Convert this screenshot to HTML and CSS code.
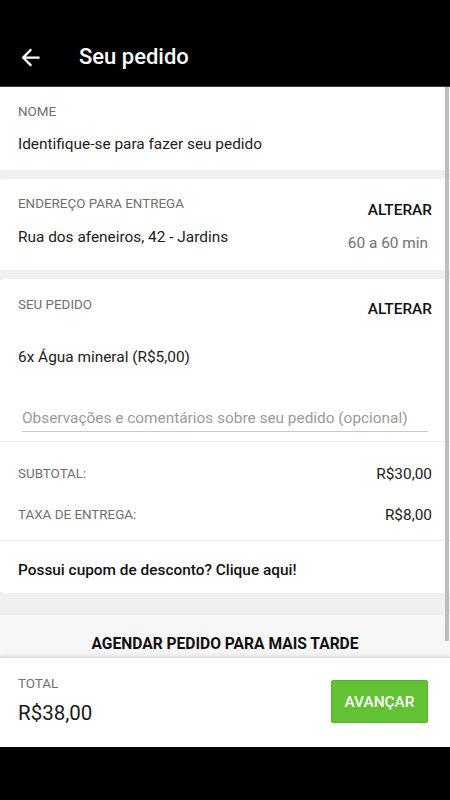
FILE: index.html
```html
<!DOCTYPE html>
<html lang="pt-BR">
  <head>
    <meta charset="UTF-8" />
    <meta name="viewport" content="width=device-width, initial-scale=1.0" />
    <title>Seu pedido</title>
    <link rel="stylesheet" href="styles.css">
  </head>
  <body>
    <div class="app">
      <!-- barra superior -->
      <header class="toolbar">
        <svg class="back" width="27" height="27" viewBox="0 0 24 24">
          <path d="M20 11H7.83l5.59-5.59L12 4l-8 8 8 8 1.41-1.41L7.83 13H20v-2z" fill="#fff" />
        </svg>
        <h1 class="title">Seu pedido</h1>
      </header>

      <main class="scroll">
        <section class="card card-name">
          <div class="label">NOME</div>
          <div class="text">Identifique-se para fazer seu pedido</div>
        </section>

        <section class="card card-address">
          <div class="col">
            <div class="label">ENDEREÇO PARA ENTREGA</div>
            <div class="text address">Rua dos afeneiros, 42 - Jardins</div>
          </div>
          <div class="col col-right">
            <div class="link">ALTERAR</div>
            <div class="time">60 a 60 min</div>
          </div>
        </section>

        <section class="card card-order">
          <div class="order-head">
            <div class="label">SEU PEDIDO</div>
            <div class="link">ALTERAR</div>
          </div>
          <div class="text item">6x Água mineral (R$5,00)</div>
          <div class="notes">Observações e comentários sobre seu pedido (opcional)</div>

          <div class="totals">
            <div class="row">
              <span class="label">SUBTOTAL:</span>
              <span class="value">R$30,00</span>
            </div>
            <div class="row">
              <span class="label">TAXA DE ENTREGA:</span>
              <span class="value">R$8,00</span>
            </div>
          </div>

          <div class="coupon">Possui cupom de desconto? Clique aqui!</div>
        </section>

        <section class="schedule">AGENDAR PEDIDO PARA MAIS TARDE</section>

        <!-- barra de rolagem -->
        <div class="scroll-thumb"></div>
      </main>

      <footer class="bottom">
        <div class="total">
          <div class="label">TOTAL</div>
          <div class="total-value">R$38,00</div>
        </div>
        <button class="btn">AVANÇAR</button>
      </footer>

      <div class="nav"></div>
    </div>
  </body>
</html>
```

FILE: styles.css
```css
* {
  padding: 0;
  margin: 0;
  box-sizing: border-box;
}

body {
  background-color: #000;
  font-family: Roboto, "Noto Sans", sans-serif;
  color: #212121;
}

.app {
  width: 450px;
  height: 800px;
  display: flex;
  flex-direction: column;
}

/* topo */
.toolbar {
  height: 87px;
  flex-shrink: 0;
  background-color: #000;
  border-bottom: 1px solid #3a3a3a;
  display: flex;
  align-items: center;
  padding: 28px 0 0 17px;
}

.back {
  display: block;
}

.title {
  margin-left: 35px;
  color: #fff;
  font-size: 22px;
  font-weight: 500;
  line-height: 26px;
}

/* conteudo */
.scroll {
  height: 570px;
  flex-shrink: 0;
  background-color: #f0f0f0;
  overflow: hidden;
  position: relative;
  display: flex;
  flex-direction: column;
  gap: 9px;
}

.card {
  flex-shrink: 0;
  background-color: #fff;
  border-radius: 2px;
}

.label {
  font-size: 13.4px;
  line-height: 16px;
  color: #6f6f6f;
}

.text {
  font-size: 15.4px;
  line-height: 20px;
  color: #212121;
}

.link {
  font-size: 15.4px;
  line-height: 20px;
  font-weight: 500;
  color: #111;
}

.card-name {
  height: 83px;
  padding: 17px 18px 0;
}

.card-name .text {
  margin-top: 14px;
}

.card-address {
  height: 91px;
  padding: 17px 18px 0;
  display: flex;
  justify-content: space-between;
}

.card-address .address {
  margin-top: 15px;
}

.col-right {
  display: flex;
  flex-direction: column;
  align-items: flex-end;
  padding-top: 4px;
}

.time {
  margin-top: 13px;
  margin-right: 4px;
  font-size: 15.4px;
  line-height: 20px;
  color: #707070;
}

.card-order {
  height: 314px;
  display: flex;
  flex-direction: column;
}

.order-head {
  display: flex;
  justify-content: space-between;
  padding: 18px 18px 0;
}

.order-head .link {
  margin-top: 2px;
}

.item {
  padding: 0 18px;
  margin-top: 28px;
}

.notes {
  margin: 41px 22px 0;
  padding-bottom: 3px;
  border-bottom: 1px solid #c8c8c8;
  font-size: 15.4px;
  line-height: 20px;
  color: #9a9a9a;
  white-space: nowrap;
}

.totals {
  margin-top: 9px;
  border-top: 1px solid #f0f0f0;
  border-bottom: 1px solid #ececec;
  padding: 22px 18px 16px;
  display: flex;
  flex-direction: column;
  gap: 22px;
}

.row {
  display: flex;
  justify-content: space-between;
  align-items: center;
  height: 19px;
}

.value {
  font-size: 15.4px;
  color: #212121;
}

.coupon {
  padding: 19px 18px 0;
  font-size: 15.4px;
  line-height: 20px;
  font-weight: 500;
  color: #111;
}

.schedule {
  margin-top: 13px;
  height: 80px;
  flex-shrink: 0;
  background: linear-gradient(#f8f8f8, #f6f6f6 40px, #ededed 42px);
  text-align: center;
  padding-top: 19px;
  font-size: 15.6px;
  line-height: 20px;
  font-weight: 700;
  color: #111;
}

.scroll-thumb {
  position: absolute;
  top: 0;
  right: 1px;
  width: 4px;
  height: 554px;
  background-color: #bdbdbd;
}

/* rodape */
.bottom {
  height: 90px;
  flex-shrink: 0;
  background-color: #fff;
  border-top: 1px solid #dcdcdc;
  box-shadow: 0 -2px 4px rgba(0, 0, 0, 0.06);
  position: relative;
  display: flex;
  justify-content: space-between;
  align-items: center;
  padding: 0 22px 0 18px;
}

.total .label {
  margin-top: -4px;
}

.total-value {
  margin-top: 9px;
  font-size: 20.5px;
  line-height: 24px;
  color: #1a1a1a;
}

.btn {
  width: 97px;
  height: 43px;
  background-color: #62c234;
  border: 1px solid #57b62a;
  border-radius: 2px;
  color: #fff;
  font-family: inherit;
  font-size: 15.4px;
  font-weight: 500;
  margin-top: -2px;
}

.nav {
  flex: 1;
  background-color: #000;
}
```
